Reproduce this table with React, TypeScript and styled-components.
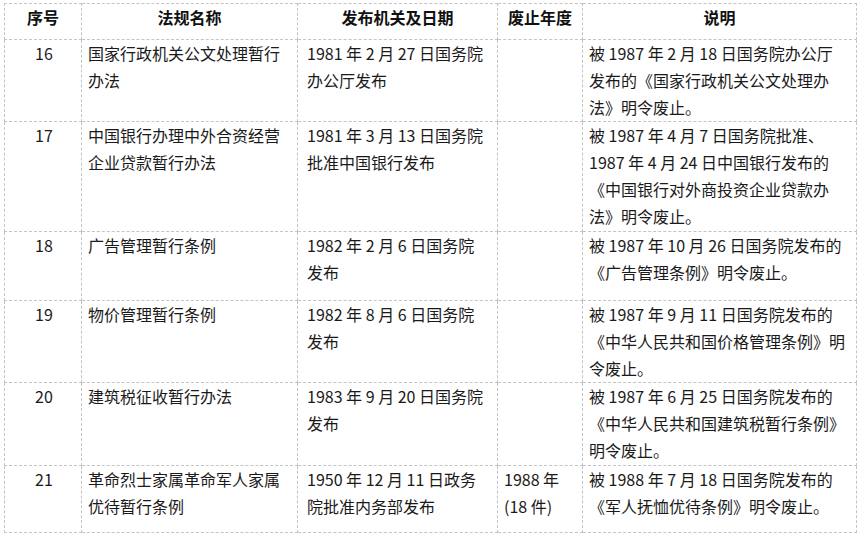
import * as React from 'react'
import styled, { createGlobalStyle } from 'styled-components';

const GlobalStyle = createGlobalStyle`
    html, body {
        margin: 0;
        padding: 0;
        background: #ffffff;
    }
    body {
        font-family: "Noto Sans CJK SC", "Noto Sans", sans-serif;
        color: #1a1a1a;
    }
`;

const Page = styled.div`
    padding: 3px 0 0 4px;
`;

const Table = styled.table`
    border-collapse: collapse;
    table-layout: fixed;
    width: 853px;
    font-size: 16px;
    line-height: 27px;
`;

const Row = styled.tr<{ $h: number }>`
    height: ${p => p.$h}px;
`;

const HeadCell = styled.th`
    border: 1px dashed #c4c4c4;
    padding: 0 6px;
    vertical-align: top;
    text-align: center;
    font-weight: 700;
    color: #111;
`;

const Cell = styled.td<{ $center?: boolean; $pad?: number }>`
    border: 1px dashed #c4c4c4;
    padding: 0 4px 0 ${p => p.$pad ?? 6}px;
    vertical-align: top;
    text-align: ${p => (p.$center ? 'center' : 'left')};
`;

const Line = styled.div`
    white-space: nowrap;
`;

type Item = {
    no: string
    name: string[]
    issuer: string[]
    year: string[]
    note: string[]
    h: number
}

const items: Item[] = [
    {
        no: '16',
        name: ['国家行政机关公文处理暂行', '办法'],
        issuer: ['1981 年 2 月 27 日国务院', '办公厅发布'],
        year: [],
        note: ['被 1987 年 2 月 18 日国务院办公厅', '发布的《国家行政机关公文处理办', '法》明令废止。'],
        h: 82,
    },
    {
        no: '17',
        name: ['中国银行办理中外合资经营', '企业贷款暂行办法'],
        issuer: ['1981 年 3 月 13 日国务院', '批准中国银行发布'],
        year: [],
        note: ['被 1987 年 4 月 7 日国务院批准、', '1987 年 4 月 24 日中国银行发布的', '《中国银行对外商投资企业贷款办', '法》明令废止。'],
        h: 110,
    },
    {
        no: '18',
        name: ['广告管理暂行条例'],
        issuer: ['1982 年 2 月 6 日国务院', '发布'],
        year: [],
        note: ['被 1987 年 10 月 26 日国务院发布的', '《广告管理条例》明令废止。'],
        h: 69,
    },
    {
        no: '19',
        name: ['物价管理暂行条例'],
        issuer: ['1982 年 8 月 6 日国务院', '发布'],
        year: [],
        note: ['被 1987 年 9 月 11 日国务院发布的', '《中华人民共和国价格管理条例》明', '令废止。'],
        h: 82,
    },
    {
        no: '20',
        name: ['建筑税征收暂行办法'],
        issuer: ['1983 年 9 月 20 日国务院', '发布'],
        year: [],
        note: ['被 1987 年 6 月 25 日国务院发布的', '《中华人民共和国建筑税暂行条例》', '明令废止。'],
        h: 83,
    },
    {
        no: '21',
        name: ['革命烈士家属革命军人家属', '优待暂行条例'],
        issuer: ['1950 年 12 月 11 日政务', '院批准内务部发布'],
        year: ['1988 年', '(18 件)'],
        note: ['被 1988 年 7 月 18 日国务院发布的', '《军人抚恤优待条例》明令废止。'],
        h: 67,
    },
];

const Lines: React.FunctionComponent<{ lines: string[] }> = ({ lines }) => (
    <>
        {lines.map((text, i) => (
            <Line key={i}>{text}</Line>
        ))}
    </>
);

export default function App() {
    return (
        <Page>
            <GlobalStyle />
            <Table>
                <colgroup>
                    <col style={{ width: 77 }} />
                    <col style={{ width: 216 }} />
                    <col style={{ width: 200 }} />
                    <col style={{ width: 85 }} />
                    <col style={{ width: 274 }} />
                </colgroup>
                <thead>
                    <Row $h={36}>
                        <HeadCell>序号</HeadCell>
                        <HeadCell>法规名称</HeadCell>
                        <HeadCell>发布机关及日期</HeadCell>
                        <HeadCell>废止年度</HeadCell>
                        <HeadCell>说明</HeadCell>
                    </Row>
                </thead>
                <tbody>
                    {items.map(item => (
                        <Row key={item.no} $h={item.h}>
                            <Cell $center>{item.no}</Cell>
                            <Cell><Lines lines={item.name} /></Cell>
                            <Cell $pad={9}><Lines lines={item.issuer} /></Cell>
                            <Cell><Lines lines={item.year} /></Cell>
                            <Cell><Lines lines={item.note} /></Cell>
                        </Row>
                    ))}
                </tbody>
            </Table>
        </Page>
    )
}
